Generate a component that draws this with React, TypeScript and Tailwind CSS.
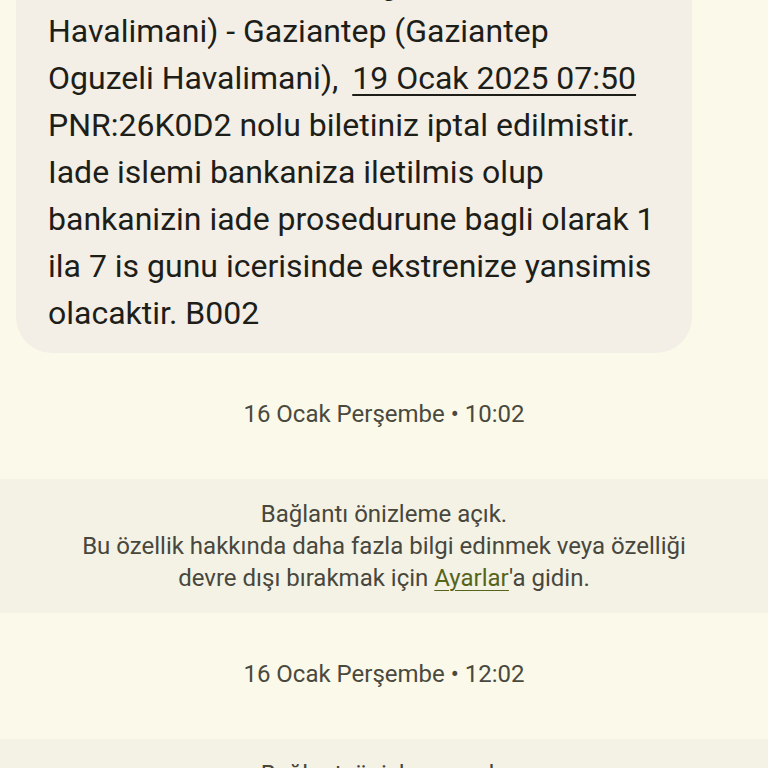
import React from "react";

const bubbleLines: React.ReactNode[] = [
  "tarihli Istanbul - Esenboga",
  "Havalimani) - Gaziantep (Gaziantep",
  <>
    Oguzeli Havalimani),{" "}
    <span className="ml-[6px] underline decoration-2 underline-offset-[5px]">
      19 Ocak 2025 07:50
    </span>
  </>,
  "PNR:26K0D2 nolu biletiniz iptal edilmistir.",
  "Iade islemi bankaniza iletilmis olup",
  "bankanizin iade prosedurune bagli olarak 1",
  "ila 7 is gunu icerisinde ekstrenize yansimis",
  "olacaktir. B002",
];

function Timestamp({ text }: { text: string }) {
  return (
    <div className="mt-[47px] h-[28px] text-center text-[24px] leading-[28px] text-[#4a493f]">
      {text}
    </div>
  );
}

function PreviewNotice() {
  return (
    <div className="mt-[51px] bg-[#f4f2e5] py-[19px] text-center text-[24px] leading-[32px] text-[#48473d]">
      <p>Bağlantı önizleme açık.</p>
      <p>Bu özellik hakkında daha fazla bilgi edinmek veya özelliği</p>
      <p>
        devre dışı bırakmak için{" "}
        <span className="text-[#56651c] underline decoration-1 underline-offset-[4px]">
          Ayarlar
        </span>
        'a gidin.
      </p>
    </div>
  );
}

export default function App() {
  return (
    <div className="h-[768px] w-[768px] overflow-hidden bg-[#fbf9e9] font-['Roboto','Noto_Sans',sans-serif]">
      <div className="px-4">
        <div className="-mt-[54px] w-[676px] rounded-[36px] bg-[#f3efe7] pb-[16px] pl-[32px] pr-4 pt-[15px] text-[32px] leading-[47px] text-[#1e1e19]">
          {bubbleLines.map((line, i) => (
            <div key={i} className="whitespace-nowrap">
              {line}
            </div>
          ))}
        </div>
      </div>

      <Timestamp text="16 Ocak Perşembe • 10:02" />
      <PreviewNotice />
      <Timestamp text="16 Ocak Perşembe • 12:02" />
      <PreviewNotice />
    </div>
  );
}
